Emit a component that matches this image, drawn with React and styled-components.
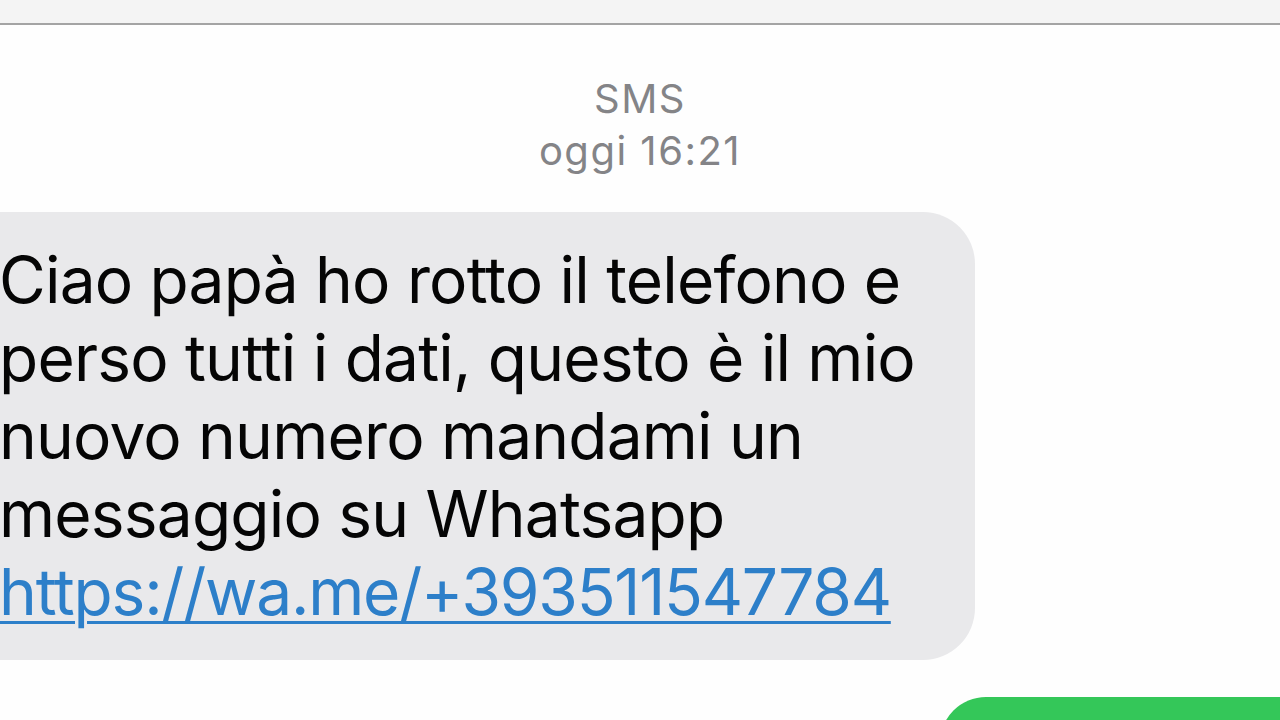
import React from 'react';
import styled, { createGlobalStyle } from 'styled-components';

const GlobalStyle = createGlobalStyle`
  html, body {
    margin: 0;
    padding: 0;
    background: #fefefe;
    overflow: hidden;
  }
  body {
    font-family: Inter, "Liberation Sans", sans-serif;
  }
`;

const Screen = styled.div`
  width: 1280px;
  height: 720px;
  overflow: hidden;
  display: flex;
  flex-direction: column;
  background: #fefefe;
`;

const TopBar = styled.div`
  height: 23px;
  background: #f4f4f4;
  border-bottom: 2px solid #a4a4a4;
  flex-shrink: 0;
`;

const Header = styled.div`
  display: flex;
  flex-direction: column;
  align-items: center;
  padding-top: 48px;
  color: #848487;
  font-size: 40px;
  line-height: 52px;
  letter-spacing: 1.5px;
`;

const Thread = styled.div`
  display: flex;
  flex-direction: column;
  padding-top: 35px;
`;

const Bubble = styled.div`
  align-self: flex-start;
  margin-left: -60px;
  width: 1035px;
  box-sizing: border-box;
  padding: 29px 20px 29px 59px;
  background: #e9e9eb;
  border-radius: 52px;
  color: #050505;
  font-size: 64px;
  line-height: 78px;
  letter-spacing: -0.8px;
`;

const Line = styled.div`
  white-space: nowrap;
`;

const Link = styled.a`
  color: #2d7fc9;
  text-decoration: underline;
  text-decoration-thickness: 3px;
  text-underline-offset: 6px;
  letter-spacing: -1.2px;
`;

const Outgoing = styled.div`
  align-self: flex-end;
  margin-top: 37px;
  margin-right: -60px;
  width: 400px;
  height: 120px;
  background: #34c759;
  border-radius: 46px;
`;

export default function App() {
  return (
    <Screen>
      <GlobalStyle />
      <TopBar />
      <Header>
        <span>SMS</span>
        <span>oggi 16:21</span>
      </Header>
      <Thread>
        <Bubble>
          <Line>Ciao papà ho rotto il telefono e</Line>
          <Line>perso tutti i dati, questo è il mio</Line>
          <Line>nuovo numero mandami un</Line>
          <Line>messaggio su Whatsapp</Line>
          <Line>
            <Link href="#">https://wa.me/+393511547784</Link>
          </Line>
        </Bubble>
        <Outgoing />
      </Thread>
    </Screen>
  );
}
